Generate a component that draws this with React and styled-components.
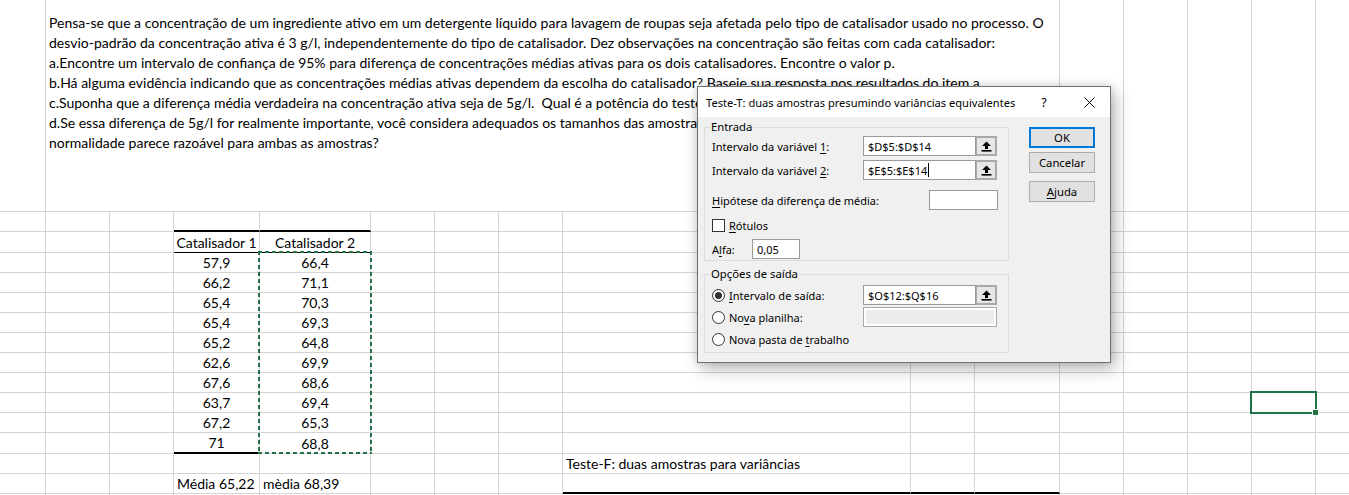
import React from 'react'
import styled, { createGlobalStyle } from 'styled-components'

const GlobalStyle = createGlobalStyle`
  html, body {
    margin: 0;
    padding: 0;
    background: #fff;
    overflow: hidden;
  }
`

// column widths / row heights measured off the sheet (gridline included)
const COLS = [46, 64, 64, 86, 111, 64, 64, 64, 348, 64, 85, 64, 64, 64, 64, 64]
const ROWS = [212, 20, 21, 20, 20, 20, 20, 20, 20, 20, 20, 20, 21, 20, 20, 20]

const GREEN = '#217346'
const GRID = '#d4d4d4'

const Sheet = styled.div`
  position: relative;
  display: grid;
  grid-template-columns: ${COLS.map(c => c + 'px').join(' ')};
  grid-template-rows: ${ROWS.map(r => r + 'px').join(' ')};
  width: 1349px;
  height: 495px;
  overflow: hidden;
  font-family: Lato, "Liberation Sans", sans-serif;
  font-size: 14px;
  color: #000;
`

const Cell = styled.div`
  grid-column: ${p => p.$col} / span ${p => p.$span || 1};
  grid-row: ${p => p.$row};
  box-sizing: border-box;
  border-right: 1px solid ${GRID};
  border-bottom: ${p =>
    p.$rule === 'thick' ? '2px solid #000' :
    p.$rule === 'thin' ? '1px solid #000' : `1px solid ${GRID}`};
  display: flex;
  align-items: center;
  justify-content: ${p => (p.$center ? 'center' : 'flex-start')};
  padding: 0 3px;
  white-space: nowrap;
  min-width: 0;
`

const TextCell = styled.div`
  grid-column: 2 / span 10;
  grid-row: 1;
  box-sizing: border-box;
  border-right: 1px solid ${GRID};
  border-bottom: 1px solid ${GRID};
  padding: 13px 0 0 3px;
  overflow: hidden;
  line-height: 20px;
  div {
    white-space: pre;
  }
`

const dash = (dir) =>
  `repeating-linear-gradient(${dir}, ${GREEN} 0 4px, transparent 4px 7px)`

const CopyRange = styled.div`
  grid-column: 5;
  grid-row: 4 / span 10;
  margin: -2px -1px 0 -2px;
  pointer-events: none;
  background:
    ${dash('90deg')} top left / 100% 2px no-repeat,
    ${dash('90deg')} bottom left / 100% 2px no-repeat,
    ${dash('180deg')} top left / 2px 100% no-repeat,
    ${dash('180deg')} top right / 2px 100% no-repeat;
`

const ActiveCell = styled.div`
  grid-column: 15;
  grid-row: 11;
  margin: -2px -1px -1px -2px;
  border: 2px solid ${GREEN};
  position: relative;
  &::after {
    content: '';
    position: absolute;
    right: -4px;
    bottom: -4px;
    width: 5px;
    height: 5px;
    background: ${GREEN};
    border: 1px solid #fff;
  }
`

/* ---------- dialog ---------- */

const Dialog = styled.div`
  position: absolute;
  left: 697px;
  top: 86px;
  width: 414px;
  height: 277px;
  box-sizing: border-box;
  border: 1px solid #707070;
  background: #f0f0f0;
  box-shadow: 4px 6px 16px rgba(0, 0, 0, 0.28), 0 0 8px rgba(0, 0, 0, 0.12);
  font-family: "Noto Sans", "Open Sans", sans-serif;
  font-size: 11px;
  color: #000;
  white-space: nowrap;
  z-index: 5;
`

const TitleBar = styled.div`
  height: 30px;
  background: #fff;
  display: flex;
  align-items: center;
  padding: 0 11px 0 8px;
  font-size: 11.1px;
`

const TitleText = styled.span`
  flex: 1;
  min-width: 0;
`

const TitleButton = styled.span`
  width: 20px;
  display: flex;
  justify-content: center;
  align-items: center;
  margin-right: ${p => p.$gap || 0}px;
  font-size: 12.5px;
`

const Body = styled.div`
  display: flex;
  padding: 2px 0 0 6px;
`

const Groups = styled.div`
  width: 305px;
  display: flex;
  flex-direction: column;
`

const Group = styled.fieldset`
  margin: ${p => p.$mt || 0}px 0 0 0;
  padding: ${p => p.$pt || 0}px 8px ${p => p.$pb || 0}px 7px;
  border: 1px solid #dcdcdc;
  min-width: 0;
`

const Legend = styled.legend`
  padding: 0 1px;
  margin-left: -2px;
  line-height: 16px;
  font-size: 11.3px;
`

const Row = styled.div`
  display: flex;
  align-items: center;
  height: 20px;
  margin-top: ${p => p.$mt || 0}px;
`

const Label = styled.span`
  width: ${p => p.$w}px;
  flex: none;
  display: flex;
  align-items: center;
`

const Caption = styled.span`
  white-space: pre;
`

const Input = styled.div`
  box-sizing: border-box;
  width: ${p => p.$w}px;
  height: 20px;
  background: #fff;
  border: 1px solid #9a9a9a;
  display: flex;
  align-items: center;
  padding-left: 4px;
`

const DisabledInput = styled.div`
  box-sizing: border-box;
  width: 134px;
  height: 20px;
  border: 1px solid #a8a8a8;
  background: #fff;
  padding: 2px;
  div {
    height: 100%;
    background: #ececec;
  }
`

const Caret = styled.span`
  display: inline-block;
  width: 1px;
  height: 14px;
  background: #000;
  margin-left: 1px;
`

const RefButton = styled.div`
  box-sizing: border-box;
  width: 21px;
  height: 20px;
  background: #e6e6e6;
  border: 2px solid #a9a9a9;
  border-left-width: 1px;
  display: flex;
  align-items: center;
  justify-content: center;
`

const Check = styled.span`
  box-sizing: border-box;
  flex: none;
  width: 13px;
  height: 13px;
  border: 1px solid #333;
  background: #fff;
  margin-right: 4px;
`

const Radio = styled.span`
  box-sizing: border-box;
  flex: none;
  width: 13px;
  height: 13px;
  border: 1px solid #333;
  border-radius: 50%;
  background: #fff;
  margin-right: 4px;
  display: flex;
  align-items: center;
  justify-content: center;
  &::after {
    content: '';
    width: 7px;
    height: 7px;
    border-radius: 50%;
    background: ${p => (p.$on ? '#333' : 'transparent')};
  }
`

const Buttons = styled.div`
  display: flex;
  flex-direction: column;
  margin-left: 20px;
  padding-top: 8px;
`

const Button = styled.div`
  box-sizing: border-box;
  width: 66px;
  height: 21px;
  margin-top: ${p => p.$mt || 0}px;
  background: #e1e1e1;
  border: ${p => (p.$primary ? '2px solid #0078d7' : '1px solid #adadad')};
  display: flex;
  align-items: center;
  justify-content: center;
  font-size: 11.3px;
`

const U = styled.span`
  text-decoration: underline;
  text-underline-offset: 2px;
`

const RefIcon = () => (
  <svg width="11" height="11" viewBox="0 0 11 11">
    <polygon points="5.5,0.5 10,5 7,5 7,8 4,8 4,5 1,5" fill="#000" />
    <rect x="0.5" y="9" width="10" height="1.6" fill="#000" />
  </svg>
)

const CloseIcon = () => (
  <svg width="11" height="11" viewBox="0 0 11 11">
    <path d="M0.5 0.5 L10.5 10.5 M10.5 0.5 L0.5 10.5" stroke="#000" strokeWidth="1" />
  </svg>
)

const RefField = ({ value, caret }) => (
  <>
    <Input $w={113}>{value}{caret && <Caret />}</Input>
    <RefButton><RefIcon /></RefButton>
  </>
)

const AnalysisDialog = () => (
  <Dialog>
    <TitleBar>
      <TitleText>Teste-T: duas amostras presumindo variâncias equivalentes</TitleText>
      <TitleButton $gap={25}>?</TitleButton>
      <TitleButton><CloseIcon /></TitleButton>
    </TitleBar>
    <Body>
      <Groups>
        <Group $pt={1} $pb={1}>
          <Legend>Entrada</Legend>
          <Row>
            <Label $w={151}><Caption>Intervalo da variável <U>1</U>:</Caption></Label>
            <RefField value="$D$5:$D$14" />
          </Row>
          <Row $mt={4}>
            <Label $w={151}><Caption>Intervalo da variável <U>2</U>:</Caption></Label>
            <RefField value="$E$5:$E$14" caret />
          </Row>
          <Row $mt={10}>
            <Label $w={217}><Caption><U>H</U>ipótese da diferença de média:</Caption></Label>
            <Input $w={69} />
          </Row>
          <Row $mt={5}>
            <Label $w={200}><Check /><Caption><U>R</U>ótulos</Caption></Label>
          </Row>
          <Row $mt={4}>
            <Label $w={40}><Caption>A<U>l</U>fa:</Caption></Label>
            <Input $w={48}>0,05</Input>
          </Row>
        </Group>
        <Group $mt={5} $pt={3} $pb={3}>
          <Legend>Opções de saída</Legend>
          <Row>
            <Label $w={151}><Radio $on /><Caption><U>I</U>ntervalo de saída:</Caption></Label>
            <RefField value="$O$12:$Q$16" />
          </Row>
          <Row $mt={2}>
            <Label $w={151}><Radio /><Caption>No<U>v</U>a planilha:</Caption></Label>
            <DisabledInput><div /></DisabledInput>
          </Row>
          <Row $mt={2}>
            <Label $w={200}><Radio /><Caption>Nova pasta de <U>t</U>rabalho</Caption></Label>
          </Row>
        </Group>
      </Groups>
      <Buttons>
        <Button $primary>OK</Button>
        <Button $mt={4}>Cancelar</Button>
        <Button $mt={8}><U>A</U>juda</Button>
      </Buttons>
    </Body>
  </Dialog>
)

/* ---------- sheet data ---------- */

const cat1 = ['57,9', '66,2', '65,4', '65,4', '65,2', '62,6', '67,6', '63,7', '67,2', '71']
const cat2 = ['66,4', '71,1', '70,3', '69,3', '64,8', '69,9', '68,6', '69,4', '65,3', '68,8']

// lines 5 and 6 run on under the dialog; only the visible part is kept
const lines = [
  'Pensa-se que a concentração de um ingrediente ativo em um detergente líquido para lavagem de roupas seja afetada pelo tipo de catalisador usado no processo. O',
  'desvio-padrão da concentração ativa é 3 g/l, independentemente do tipo de catalisador. Dez observações na concentração são feitas com cada catalisador:',
  'a.Encontre um intervalo de confiança de 95% para diferença de concentrações médias ativas para os dois catalisadores. Encontre o valor p.',
  'b.Há alguma evidência indicando que as concentrações médias ativas dependem da escolha do catalisador? Baseie sua resposta nos resultados do item a.',
  'c.Suponha que a diferença média verdadeira na concentração ativa seja de 5g/l.  Qual é a potência do teste',
  'd.Se essa diferença de 5g/l for realmente importante, você considera adequados os tamanhos das amostras',
  'normalidade parece razoável para ambas as amostras?',
]

function cellFor(row, col) {
  // returns { text, center, rule }
  if (row === 2 && (col === 4 || col === 5)) return { rule: 'thick' }
  if (row === 3 && col === 4) return { text: 'Catalisador 1', center: true, rule: 'thin' }
  if (row === 3 && col === 5) return { text: 'Catalisador 2', center: true, rule: 'thin' }
  if (row >= 4 && row <= 13 && col === 4)
    return { text: cat1[row - 4], center: true, rule: row === 13 ? 'thick' : null }
  if (row >= 4 && row <= 13 && col === 5) return { text: cat2[row - 4], center: true }
  if (row === 14 && col === 9) return { text: 'Teste-F: duas amostras para variâncias' }
  if (row === 15 && col === 4) return { text: 'Média 65,22' }
  if (row === 15 && col === 5) return { text: 'mèdia 68,39' }
  if (row === 15 && col >= 9 && col <= 11) return { rule: 'thick' }
  return {}
}

export default function App() {
  const cells = []
  for (let r = 1; r <= ROWS.length; r++) {
    for (let c = 1; c <= COLS.length; c++) {
      if (r === 1 && c >= 2 && c <= 11) continue
      const { text, center, rule } = cellFor(r, c)
      cells.push(
        <Cell key={r + '-' + c} $row={r} $col={c} $center={center} $rule={rule}>
          {text}
        </Cell>
      )
    }
  }

  return (
    <>
      <GlobalStyle />
      <Sheet>
        <TextCell>
          {lines.map((l, i) => <div key={i}>{l}</div>)}
        </TextCell>
        {cells}
        <CopyRange />
        <ActiveCell />
        <AnalysisDialog />
      </Sheet>
    </>
  )
}
